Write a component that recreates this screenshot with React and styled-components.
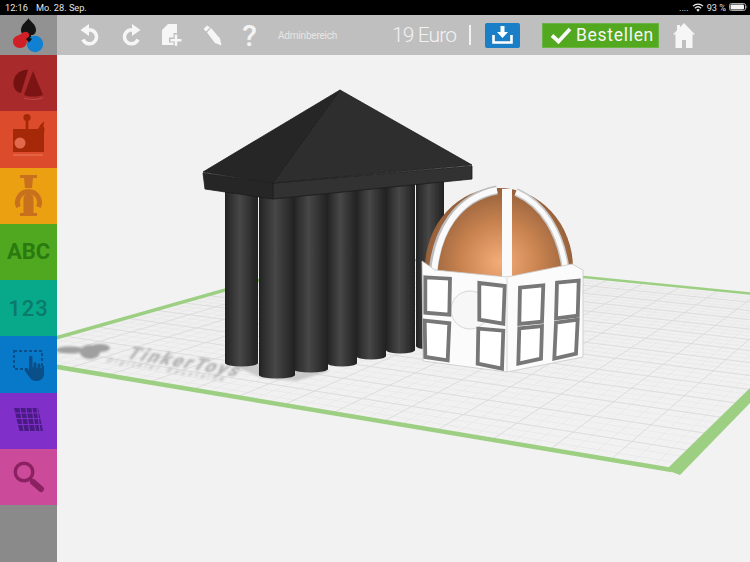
import React from 'react';
import styled, { createGlobalStyle } from 'styled-components';

const GlobalStyle = createGlobalStyle`
  html, body { margin: 0; padding: 0; background: #f2f2f2; }
  body { font-family: Roboto, "Liberation Sans", sans-serif; overflow: hidden; }
`;

const Page = styled.div`
  width: 750px;
  height: 562px;
  display: flex;
  flex-direction: column;
  overflow: hidden;
`;

const StatusBar = styled.div`
  height: 15px;
  background: #000;
  color: #e4e4e4;
  font-size: 9.2px;
  display: flex;
  align-items: center;
  justify-content: space-between;
  padding: 0 2px 1px 5px;
  box-sizing: border-box;
`;

const StatusLeft = styled.div`
  display: flex;
  gap: 8px;
`;

const StatusRight = styled.div`
  display: flex;
  align-items: center;
  gap: 3px;
`;

const Body = styled.div`
  flex: 1;
  display: flex;
  min-height: 0;
`;

const Sidebar = styled.nav`
  width: 57px;
  flex: none;
  display: flex;
  flex-direction: column;
  background: #8a8a8a;
`;

const LogoCell = styled.div`
  height: 40px;
  background: #929292;
  flex: none;
`;

const SideItem = styled.div`
  height: 56.25px;
  flex: none;
  background: ${(p) => p.$bg};
  display: flex;
  align-items: center;
  justify-content: center;
`;

const SideLabel = styled.span`
  color: ${(p) => p.$color};
  font-size: 22px;
  font-weight: ${(p) => p.$weight};
  letter-spacing: ${(p) => p.$spacing};
`;

const Main = styled.div`
  flex: 1;
  display: flex;
  flex-direction: column;
  min-width: 0;
`;

const Toolbar = styled.div`
  height: 40px;
  flex: none;
  background: #bfbfbf;
  display: flex;
  align-items: center;
  padding: 0 55px 0 12px;
  color: #f4f4f4;
`;

const ToolIcon = styled.div`
  width: ${(p) => p.$width || 41}px;
  height: 40px;
  display: flex;
  align-items: center;
  justify-content: center;
  font-size: 30px;
  font-weight: 500;
`;

const AdminLabel = styled.span`
  font-size: 10px;
  letter-spacing: -0.2px;
  margin-left: 12px;
  color: #e6e6e6;
`;

const CheckoutGroup = styled.div`
  margin-left: auto;
  display: flex;
  align-items: center;
`;

const Price = styled.span`
  font-size: 21px;
  font-weight: 300;
  letter-spacing: -0.9px;
  color: #f2f2f2;
`;

const Divider = styled.span`
  width: 2px;
  height: 20px;
  background: #f2f2f2;
  margin: 0 14px 0 13px;
`;

const SaveButton = styled.button`
  width: 35px;
  height: 25px;
  border: 0;
  padding: 0;
  border-radius: 2px;
  background: #1a7fc6;
  display: flex;
  align-items: center;
  justify-content: center;
  margin-right: 22px;
`;

const OrderButton = styled.button`
  width: 117px;
  height: 25px;
  border: 1px solid #6cb544;
  box-sizing: border-box;
  padding: 0 0 0 7px;
  background: #52a81e;
  color: #f6f6f6;
  font-family: Roboto, "Liberation Sans", sans-serif;
  font-size: 17.5px;
  letter-spacing: 0.7px;
  display: flex;
  align-items: center;
  gap: 4px;
  margin-right: 14px;
`;

const Canvas = styled.div`
  flex: 1;
  min-height: 0;
  background: #f2f2f2;
  line-height: 0;
`;

const Flip = styled.svg`
  transform: ${(p) => (p.$flip ? 'scaleX(-1)' : 'none')};
`;

const TurnArrow = ({ flip }) => (
  <Flip $flip={flip} width="20" height="22" viewBox="0 0 20 22">
    <path d="M7 6h4a7 7 0 1 1-8 9.500" fill="none" stroke="#f6f6f6" strokeWidth="3.500" />
    <path d="M0.500 6 9 0v12z" fill="#f6f6f6" />
  </Flip>
);

const NewFileIcon = () => (
  <svg width="20" height="22" viewBox="0 0 20 22">
    <path d="M6 0h9v21H0V6z" fill="#f6f6f6" />
    <path d="M7 13.500h4.500V9h5v4.500H20v5h-3.500V22h-5v-3.500H7z" fill="#bfbfbf" />
    <path d="M12.700 10.500h2.600V15h4.200v2.600h-4.200v4.200h-2.600v-4.200H8.500V15h4.200z" fill="#f6f6f6" />
  </svg>
);

const PencilIcon = () => (
  <svg width="20" height="21" viewBox="0 0 20 21">
    <path d="M0.500 4 4 0.500l3 2-4 4z" fill="#f6f6f6" />
    <path d="M4 7.500 8 3l9 10.500 1.500 7-6.500-2.500z" fill="#f6f6f6" />
  </svg>
);

const DownloadIcon = () => (
  <svg width="21" height="18" viewBox="0 0 21 18">
    <path d="M8.500 0h4v6H16l-5.500 6L5 6h3.500z" fill="#fff" />
    <path d="M1.500 9v7.500h18V9" fill="none" stroke="#fff" strokeWidth="2.600" />
  </svg>
);

const CheckIcon = () => (
  <svg width="22" height="17" viewBox="0 0 22 17">
    <path d="M2 8.500 8.500 14.500 20 2" fill="none" stroke="#fafafa" strokeWidth="3.800" />
  </svg>
);

const HomeIcon = () => (
  <svg width="22" height="25" viewBox="0 0 22 25">
    <path d="M11 0 22 11.500h-2.500V25H13v-8H9v8H2.500V11.500H0L4 7.300V2h3v2.200z" fill="#f6f6f6" />
  </svg>
);

const WifiIcon = () => (
  <svg width="12" height="9" viewBox="0 0 12 9">
    <path d="M6 8.800 4.300 6.800a2.600 2.600 0 0 1 3.400 0z" fill="#eee" />
    <path d="M2.900 5.200a4.600 4.600 0 0 1 6.200 0M1 3.100a7.300 7.300 0 0 1 10 0" fill="none" stroke="#eee" strokeWidth="1.300" />
  </svg>
);

const BatteryIcon = () => (
  <svg width="19" height="8" viewBox="0 0 19 8">
    <rect x="0.500" y="0.500" width="16" height="7" rx="1.800" fill="none" stroke="#aaa" />
    <rect x="1.500" y="1.500" width="13.500" height="5" rx="1" fill="#f2f2f2" />
    <path d="M17.500 2.500c1 .3 1 2.700 0 3z" fill="#aaa" />
  </svg>
);

const LogoMark = () => (
  <svg width="57" height="40" viewBox="0 0 57 40">
    <path d="M28.500 3c1 3 7.500 6 7.500 12 0 4-3 5.500-5 5l1 4h-7l1-4c-2 .500-5-1-5-5 0-6 6.500-9 7.500-12z" fill="#141414" />
    <path d="M21 19c3-3 7-3 8 0s-2 4-2 6 0 8-7 8c-4.500 0-7-3-7-7s4-5 8-7z" fill="#cf2027" />
    <circle cx="35" cy="29" r="8.200" fill="#0f80d2" />
    <path d="M26 24c3-3 4-1 6 0l-3 3.500z" fill="#141414" />
  </svg>
);

const ShapesIcon = () => (
  <svg width="57" height="56" viewBox="0 0 57 56">
    <path d="M28 15 21 38c-6-1-9-7-7-14 2-6 9-10 14-9z" fill="#741212" />
    <path d="M33 16 43 40c-5 2-14 2-19 0z" fill="#7c1414" />
    <path d="M24 43c6 2 14 2 19-.500" fill="none" stroke="#c44a44" />
  </svg>
);

const ToyIcon = () => (
  <svg width="57" height="56" viewBox="0 0 57 56">
    <circle cx="27" cy="6.500" r="3.600" fill="#a52808" />
    <path d="M25.700 8h2.600v10h-2.600z" fill="#a52808" />
    <path d="M13 18h24c1 0 2-1 2.500-2.500 1-2 2.500-4 5-5-1 3-1.500 4-.5 6s0 4 0 6v18.500H13z" fill="#a52808" />
    <circle cx="20" cy="32" r="5.500" fill="#e2694c" />
    <path d="M13 44h30" stroke="#ec7a5e" />
  </svg>
);

const VaseIcon = () => (
  <svg width="57" height="56" viewBox="0 0 57 56">
    <path d="M20 7h17v3h-4l-1 10h-7l-1-10h-4z" fill="#c8701e" />
    <path d="M18.500 39A11 11 0 1 1 38.500 39" fill="none" stroke="#c8701e" strokeWidth="5" />
    <path d="M23.500 45V30.500a5 5 0 0 1 10 0V45z" fill="#c8701e" />
    <path d="M20 45h17v3H20z" fill="#c8701e" />
  </svg>
);

const SelectIcon = () => (
  <svg width="57" height="56" viewBox="0 0 57 56">
    <rect x="14" y="15" width="28" height="18" fill="none" stroke="#0b4f88" strokeWidth="2" strokeDasharray="3 2" />
    <path d="M29 21.500c0-2.500 3.500-2.500 3.500 0V31l1 .2v-3.500c0-2 3-2 3 0V32l1 .2V29c0-2 3-2 3 0v3.500l1 .3V31c0-2 2.500-2 2.500 0v7c0 4-3 7-7.500 7-4 0-6-2-7.500-4.500L25 35c-1.500-2.500 1.500-4 3-2l1 1.500z" fill="#0b4f88" />
  </svg>
);

const PlateIcon = () => (
  <svg width="57" height="56" viewBox="0 0 57 56">
    <path d="M14 15h24l5 23H19.500z" fill="#4a1a85" />
    <g fill="none" stroke="#8030c8" strokeWidth="1.100">
      <path d="M20 15l4 23M26 15l3.500 23M32 15l3.500 23M37 15l3 23" />
      <path d="M15 20h24M16 25.500h25M17.500 31.500h24.500" />
    </g>
  </svg>
);

const SearchIcon = () => (
  <svg width="57" height="56" viewBox="0 0 57 56">
    <circle cx="24" cy="23" r="8.800" fill="none" stroke="#8a2262" strokeWidth="3.400" />
    <path d="M30.500 30 33 32.500" stroke="#8a2262" strokeWidth="3" />
    <path d="M33 33 41 40" stroke="#8a2262" strokeWidth="6" strokeLinecap="round" />
  </svg>
);

// maps plate coordinates (0..1, 0..1) onto the screen, the plate sits in perspective
const corners = [[-8, 356], [352, 255], [837, 303], [675, 470]];

function solveHomography([p0, p1, p2, p3]) {
  const dx1 = p1[0] - p2[0];
  const dx2 = p3[0] - p2[0];
  const dx3 = p0[0] - p1[0] + p2[0] - p3[0];
  const dy1 = p1[1] - p2[1];
  const dy2 = p3[1] - p2[1];
  const dy3 = p0[1] - p1[1] + p2[1] - p3[1];
  const den = dx1 * dy2 - dx2 * dy1;
  const g = (dx3 * dy2 - dx2 * dy3) / den;
  const h = (dx1 * dy3 - dx3 * dy1) / den;
  return (u, v) => {
    const w = g * u + h * v + 1;
    return [
      ((p1[0] - p0[0] + g * p1[0]) * u + (p3[0] - p0[0] + h * p3[0]) * v + p0[0]) / w,
      ((p1[1] - p0[1] + g * p1[1]) * u + (p3[1] - p0[1] + h * p3[1]) * v + p0[1]) / w,
    ];
  };
}

const project = solveHomography(corners);

function gridPath(count) {
  let d = '';
  for (let i = 1; i < count; i += 1) {
    const t = i / count;
    const a = project(t, 0);
    const b = project(t, 1);
    const c = project(0, t);
    const e = project(1, t);
    d += `M${a[0].toFixed(1)} ${a[1].toFixed(1)}L${b[0].toFixed(1)} ${b[1].toFixed(1)}`;
    d += `M${c[0].toFixed(1)} ${c[1].toFixed(1)}L${e[0].toFixed(1)} ${e[1].toFixed(1)}`;
  }
  return d;
}

const columns = [
  { x: 416, w: 28, top: 178, bottom: 346 },
  { x: 386, w: 29, top: 182, bottom: 350 },
  { x: 356, w: 30, top: 184, bottom: 356 },
  { x: 327, w: 30, top: 188, bottom: 363 },
  { x: 293, w: 35, top: 192, bottom: 369 },
  { x: 225, w: 33, top: 188, bottom: 363 },
  { x: 259, w: 36, top: 196, bottom: 375 },
];

// dome window quads, written as coordinates of the 3x zoom, origin 400/170
const windows = [
  [76, 322, 150, 326, 148, 434, 76, 428],
  [74, 452, 148, 460, 143, 571, 76, 561],
  [238, 339, 314, 348, 310, 461, 238, 449],
  [235, 476, 310, 482, 306, 596, 233, 581],
  [360, 353, 430, 346, 426, 455, 358, 462],
  [358, 475, 426, 468, 423, 566, 355, 581],
  [471, 338, 536, 332, 533, 437, 468, 445],
  [468, 458, 533, 449, 528, 551, 463, 566],
].map((q) => q.map((n, i) => (i % 2 ? 170 + n / 3 : 400 + n / 3).toFixed(1)).join(' '));

const Scene = () => (
  <svg width="693" height="507" viewBox="57 55 693 507">
    <defs>
      <linearGradient id="col" x1="0" x2="1" y1="0" y2="0">
        <stop offset="0" stopColor="#232323" />
        <stop offset="0.45" stopColor="#474747" />
        <stop offset="0.8" stopColor="#2e2e2e" />
        <stop offset="1" stopColor="#222" />
      </linearGradient>
      <radialGradient id="copper" gradientUnits="userSpaceOnUse" cx="500" cy="262" r="78">
        <stop offset="0" stopColor="#f4ad78" />
        <stop offset="0.5" stopColor="#c98350" />
        <stop offset="1" stopColor="#8f5c38" />
      </radialGradient>
      <filter id="soft" x="-5%" y="-5%" width="110%" height="110%">
        <feGaussianBlur stdDeviation="0.5" />
      </filter>
      <filter id="softer" x="-5%" y="-20%" width="110%" height="140%">
        <feGaussianBlur stdDeviation="0.9" />
      </filter>
    </defs>

    <polygon points={corners.map((c) => c.join(',')).join(' ')} fill="#f3f3f3" />
    <path d={gridPath(126)} stroke="#ececec" strokeWidth="0.3" fill="none" />
    <path d={gridPath(42)} stroke="#e6e6e6" strokeWidth="0.6" fill="none" />
    <path d={gridPath(14)} stroke="#d9d9d9" strokeWidth="0.7" fill="none" />

    <g fill="none" stroke="#9ccf82" strokeLinejoin="miter">
      <path d="M-8 356 352 254" strokeWidth="3.500" />
      <path d="M352 254 837 302" strokeWidth="2.500" />
      <path d="M-8 356 672 470" strokeWidth="4.500" />
    </g>
    <polygon points="669,467 750,388 750,403 680,475 672,472" fill="#9ccf82" />

    <g filter="url(#softer)">
      <g fill="#a0a0a0">
        <ellipse cx="70" cy="350" rx="14" ry="3.500" />
        <ellipse cx="90" cy="352" rx="10" ry="7" />
        <ellipse cx="100" cy="348" rx="10" ry="4" />
      </g>
      <g transform="translate(125 358) rotate(9.500) skewX(-28)">
        <text x="0" y="0" fontFamily="Roboto, sans-serif" fontSize="18" fontWeight="900" fill="#b4b4b4" textLength="112">TinkerToys</text>
      </g>
      <g transform="translate(106 362) rotate(9.500) skewX(-28)">
        <text x="0" y="0" fontFamily="Roboto, sans-serif" fontSize="7.500" fontWeight="700" fill="#c0c0c0" textLength="118">Digitaler Bausteine</text>
      </g>
      <path d="M230 364 255 358 262 370 300 362 330 371 296 381 262 378z" fill="#c9c9c9" />
    </g>

    <g filter="url(#soft)">
      {columns.map((c) => (
        <g key={c.x}>
          <rect x={c.x} y={c.top} width={c.w} height={c.bottom - c.top} fill="url(#col)" />
          <ellipse cx={c.x + c.w / 2} cy={c.bottom} rx={c.w / 2} ry={3.500} fill="url(#col)" />
        </g>
      ))}
      <g stroke="#1c1c1c" strokeWidth="0.800" strokeLinejoin="round">
        <polygon points="203,173 273,183 273,199 205,189" fill="#282828" />
        <polygon points="273,183 472,166 472,179 273,199" fill="#303030" />
        <polygon points="340,90 203,172 273,183" fill="#262626" />
        <polygon points="340,90 273,183 472,165" fill="#2e2e2e" />
      </g>

      <path d="M425 280V268A74 80 0 0 1 573 268V280z" fill="url(#copper)" />
      <g fill="none" strokeLinecap="butt">
        <path d="M433 272C437 232 456 198 497 190" stroke="#bdbdbd" strokeWidth="9" />
        <path d="M434 272C438 232 457 198 497 190" stroke="#fafafa" strokeWidth="6" />
        <path d="M566 272C561 232 543 204 516 192" stroke="#c9c9c9" strokeWidth="8" />
        <path d="M566 272C561 232 543 204 516 192" stroke="#fafafa" strokeWidth="5" />
        <path d="M507 189V280" stroke="#fafafa" strokeWidth="10" />
      </g>
      <polygon points="422,261 435,270 507,277 572,264 583,270 583,357 507,372 423,361" fill="#fbfbfb" stroke="#c8c8c8" strokeWidth="0.800" />
      <path d="M507 278V372" stroke="#d0d0d0" strokeWidth="0.800" />
      <circle cx="470" cy="310" r="19" fill="#f7f7f7" stroke="#d6d6d6" />
      {windows.map((w) => (
        <polygon key={w} points={w} fill="#fff" stroke="#777" strokeWidth="3.800" />
      ))}
    </g>
  </svg>
);

const sideItems = [
  { bg: '#a82a2a', icon: <ShapesIcon /> },
  { bg: '#dc4c2c', icon: <ToyIcon /> },
  { bg: '#eba012', icon: <VaseIcon /> },
  { bg: '#4fa81f', label: 'ABC', color: '#2a7a10', weight: 700, spacing: '0' },
  { bg: '#08a98a', label: '123', color: '#0a7a6a', weight: 500, spacing: '1px' },
  { bg: '#0878c8', icon: <SelectIcon /> },
  { bg: '#8030c8', icon: <PlateIcon /> },
  { bg: '#cc4a9a', icon: <SearchIcon /> },
];

export default function App() {
  return (
    <Page>
      <GlobalStyle />
      <StatusBar>
        <StatusLeft>
          <span>12:16</span>
          <span>Mo. 28. Sep.</span>
        </StatusLeft>
        <StatusRight>
          <span>....</span>
          <WifiIcon />
          <span>93 %</span>
          <BatteryIcon />
        </StatusRight>
      </StatusBar>
      <Body>
        <Sidebar>
          <LogoCell>
            <LogoMark />
          </LogoCell>
          {sideItems.map((item) => (
            <SideItem key={item.bg} $bg={item.bg}>
              {item.icon || (
                <SideLabel $color={item.color} $weight={item.weight} $spacing={item.spacing}>
                  {item.label}
                </SideLabel>
              )}
            </SideItem>
          ))}
        </Sidebar>
        <Main>
          <Toolbar>
            <ToolIcon><TurnArrow /></ToolIcon>
            <ToolIcon><TurnArrow flip /></ToolIcon>
            <ToolIcon><NewFileIcon /></ToolIcon>
            <ToolIcon><PencilIcon /></ToolIcon>
            <ToolIcon $width={33}>?</ToolIcon>
            <AdminLabel>Adminbereich</AdminLabel>
            <CheckoutGroup>
              <Price>19 Euro</Price>
              <Divider />
              <SaveButton aria-label="Speichern"><DownloadIcon /></SaveButton>
              <OrderButton><CheckIcon />Bestellen</OrderButton>
              <HomeIcon />
            </CheckoutGroup>
          </Toolbar>
          <Canvas>
            <Scene />
          </Canvas>
        </Main>
      </Body>
    </Page>
  );
}
